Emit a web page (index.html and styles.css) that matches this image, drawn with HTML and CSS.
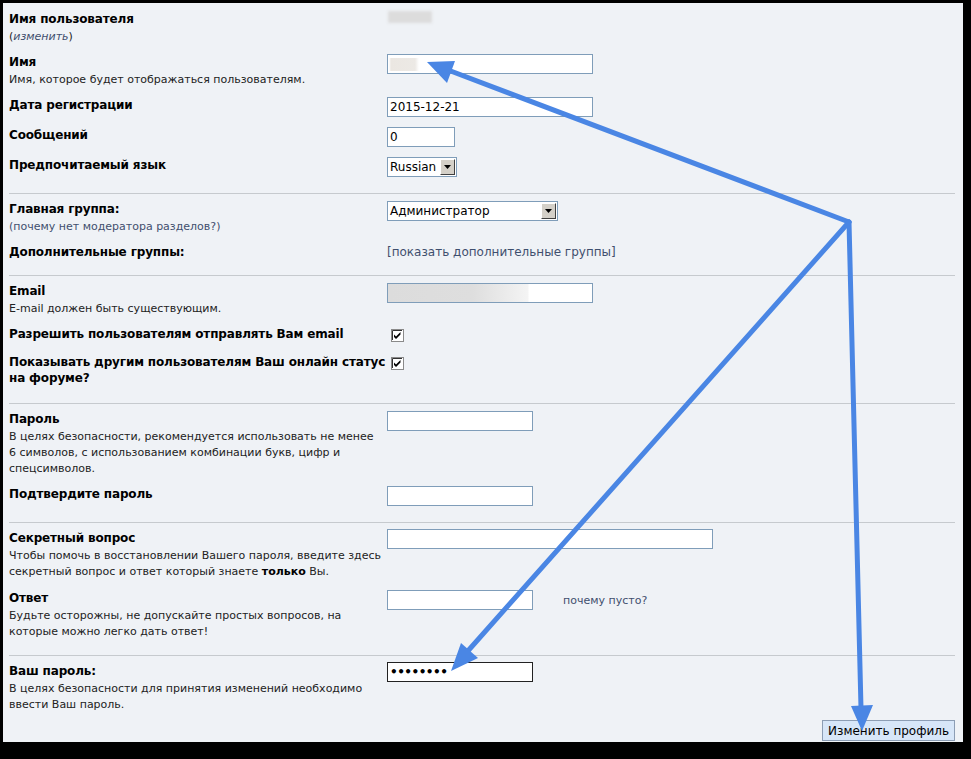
FILE: index.html
```html
<!DOCTYPE html>
<html lang="ru">
<head>
    <meta charset="UTF-8">
    <title>Изменить профиль</title>
    <link rel="stylesheet" href="styles.css">
</head>
<body>
    <form class="panel">
        <div class="section first">
            <div class="row">
                <div>
                    <div class="label">Имя пользователя</div>
                    <div class="desc">(<a class="link italic" href="#">изменить</a>)</div>
                </div>
                <div class="field"><span class="blur"></span></div>
            </div>
            <div class="row">
                <div>
                    <div class="label">Имя</div>
                    <div class="desc">Имя, которое будет отображаться пользователям.</div>
                </div>
                <div class="field"><input class="text-input w-wide name-value" type="text"></div>
            </div>
            <div class="row">
                <div class="label">Дата регистрации</div>
                <div class="field"><input class="text-input w-wide" type="text" value="2015-12-21"></div>
            </div>
            <div class="row">
                <div class="label">Сообщений</div>
                <div class="field"><input class="text-input w-small" type="text" value="0"></div>
            </div>
            <div class="row">
                <div class="label">Предпочитаемый язык</div>
                <div class="field">
                    <div class="select w-lang"><span class="select-value">Russian</span><span class="select-btn"><svg width="7" height="4" viewBox="0 0 7 4"><path d="M0 0h7L3.5 4z" fill="#000"/></svg></span></div>
                </div>
            </div>
        </div>

        <div class="section">
            <div class="row">
                <div>
                    <div class="label">Главная группа:</div>
                    <div class="desc"><a class="link" href="#">(почему нет модератора разделов?)</a></div>
                </div>
                <div class="field">
                    <div class="select w-group"><span class="select-value">Администратор</span><span class="select-btn"><svg width="7" height="4" viewBox="0 0 7 4"><path d="M0 0h7L3.5 4z" fill="#000"/></svg></span></div>
                </div>
            </div>
            <div class="row">
                <div class="label">Дополнительные группы:</div>
                <div class="field"><a class="link big" href="#">[показать дополнительные группы]</a></div>
            </div>
        </div>

        <div class="section">
            <div class="row">
                <div>
                    <div class="label">Email</div>
                    <div class="desc">E-mail должен быть существующим.</div>
                </div>
                <div class="field"><input class="text-input w-wide email-value" type="text"></div>
            </div>
            <div class="row">
                <div class="label">Разрешить пользователям отправлять Вам email</div>
                <div class="field">
                    <svg class="check" width="13" height="13" viewBox="0 0 13 13"><rect x="0.5" y="0.5" width="12" height="12" fill="#fff" stroke="#8a8a8a"/><path d="M1.5 11V1.5H11" stroke="#333" fill="none"/><path d="M3 5.5l2 2 4.5-4.5v2.5L5 10 3 8z" fill="#000"/></svg>
                </div>
            </div>
            <div class="row tall">
                <div class="label">Показывать другим пользователям Ваш онлайн статус<br>на форуме?</div>
                <div class="field">
                    <svg class="check" width="13" height="13" viewBox="0 0 13 13"><rect x="0.5" y="0.5" width="12" height="12" fill="#fff" stroke="#8a8a8a"/><path d="M1.5 11V1.5H11" stroke="#333" fill="none"/><path d="M3 5.5l2 2 4.5-4.5v2.5L5 10 3 8z" fill="#000"/></svg>
                </div>
            </div>
        </div>

        <div class="section">
            <div class="row">
                <div>
                    <div class="label">Пароль</div>
                    <div class="desc">В целях безопасности, рекомендуется использовать не менее<br>6 символов, с использованием комбинации букв, цифр и<br>спецсимволов.</div>
                </div>
                <div class="field"><input class="text-input w-mid" type="password"></div>
            </div>
            <div class="row">
                <div class="label">Подтвердите пароль</div>
                <div class="field"><input class="text-input w-mid" type="password"></div>
            </div>
        </div>

        <div class="section">
            <div class="row">
                <div>
                    <div class="label">Секретный вопрос</div>
                    <div class="desc">Чтобы помочь в восстановлении Вашего пароля, введите здесь<br>секретный вопрос и ответ который знаете <b class="dark">только</b> Вы.</div>
                </div>
                <div class="field up"><input class="text-input w-long" type="text"></div>
            </div>
            <div class="row loose">
                <div>
                    <div class="label">Ответ</div>
                    <div class="desc">Будьте осторожны, не допускайте простых вопросов, на<br>которые можно легко дать ответ!</div>
                </div>
                <div class="field"><input class="text-input w-mid" type="text"><a class="link" href="#">почему пусто?</a></div>
            </div>
        </div>

        <div class="section last">
            <div class="row">
                <div>
                    <div class="label">Ваш пароль:</div>
                    <div class="desc">В целях безопасности для принятия изменений необходимо<br>ввести Ваш пароль.</div>
                </div>
                <div class="field up"><input class="text-input w-mid focused" type="password" value="12345678"></div>
            </div>
            <div class="actions">
                <button class="submit" type="button">Изменить профиль</button>
            </div>
        </div>
    </form>

    <!-- annotation arrows drawn over the form -->
    <svg class="arrows" width="971" height="759" viewBox="0 0 971 759">
        <g stroke="#4a86e4" stroke-width="5" stroke-linecap="round" fill="none">
            <path d="M849 222L448 70"/>
            <path d="M849 222L467 652"/>
            <path d="M849 222L861 708"/>
        </g>
        <g fill="#4a86e4">
            <polygon points="427,62 455,61 447,83"/>
            <polygon points="451,671 461,643 478,658"/>
            <polygon points="862,731 851,706 873,705"/>
        </g>
    </svg>
</body>
</html>
```

FILE: styles.css
```css
html {
    background: #000;
}
body {
    margin: 0;
    position: relative;
    font-family: "DejaVu Sans", Verdana, sans-serif;
    color: #000;
}
.panel {
    display: block;
    margin: 3px 8px 0 3px;
    height: 739px;
    box-sizing: border-box;
    padding: 0 8px 1px 6px;
    background: #eff2f6;
}
.section {
    padding: 3px 0 10px;
    border-bottom: 1px solid #c6cace;
}
.section.first {
    padding-top: 4px;
}
.section.last {
    border-bottom: none;
    padding-bottom: 0;
}
.row {
    display: grid;
    grid-template-columns: 378px 1fr;
    padding: 4px 0 5px;
}
.row.tall {
    padding-bottom: 7px;
}
.row.loose {
    padding-top: 5px;
}
.label {
    font-size: 12px;
    font-weight: bold;
    line-height: 16px;
    letter-spacing: -0.15px;
    white-space: nowrap;
}
.desc {
    margin-top: 2px;
    font-size: 11px;
    line-height: 16px;
    color: #222;
    white-space: nowrap;
}
.dark {
    color: #000;
}
.link {
    color: #3f4f6e;
    text-decoration: none;
    font-size: 11px;
}
.link.big {
    font-size: 12px;
    line-height: 16px;
}
.italic {
    font-style: italic;
}
.field {
    display: flex;
    align-items: center;
    align-self: start;
    gap: 30px;
}
.field.up {
    margin-top: -1px;
}
.text-input {
    height: 20px;
    box-sizing: border-box;
    margin: 0 0 1px;
    padding: 0 2px;
    border: 1px solid #7f9db9;
    background: #fff;
    font-family: "DejaVu Sans", Verdana, sans-serif;
    font-size: 12px;
    color: #000;
    outline: none;
}
.text-input.focused {
    border-color: #222;
    font-weight: bold;
    letter-spacing: -0.5px;
}
.w-wide { width: 206px; }
.w-small { width: 68px; }
.w-mid { width: 146px; }
.w-long { width: 326px; }
.name-value {
    background: #fff linear-gradient(90deg, #fff 1px, #ebe7e2 3px, #ece9e5 27px, #fff 31px) no-repeat 0 center / 100% 13px;
}
.email-value {
    background: #fff linear-gradient(90deg, #dcdcdc 0, #dedede 85px, #eeeeee 125px, #f4f4f4 140px, #fff 141px) no-repeat 0 0 / 100% 100%;
}
.blur {
    display: block;
    width: 44px;
    height: 12px;
    margin: 0 0 0 1px;
    background: #dcdcdc;
    filter: blur(1.5px);
}
.select {
    display: inline-flex;
    height: 20px;
    box-sizing: border-box;
    margin-bottom: 1px;
    border: 1px solid #7f9db9;
    background: #fff;
    font-size: 12px;
}
.w-lang { width: 70px; }
.w-group { width: 171px; }
.select-value {
    flex: 1;
    padding: 0 2px;
    line-height: 18px;
    overflow: hidden;
}
.select-btn {
    width: 15px;
    margin: 1px 1px 0 0;
    height: 16px;
    box-sizing: border-box;
    display: flex;
    align-items: center;
    justify-content: center;
    background: #d4d0c8;
    border-top: 1px solid #fff;
    border-left: 1px solid #fff;
    border-right: 1px solid #404040;
    border-bottom: 1px solid #404040;
}
.check {
    display: block;
    margin: 3px 0 3px 4px;
}
.actions {
    display: flex;
    justify-content: flex-end;
    padding-top: 2px;
}
.submit {
    height: 21px;
    padding: 0 5px;
    border: 1px solid #8c9db4;
    background: #d7e6f8;
    font-family: "DejaVu Sans", Verdana, sans-serif;
    font-size: 12px;
    color: #000;
}
.arrows {
    position: absolute;
    left: 0;
    top: 0;
    pointer-events: none;
}
```
